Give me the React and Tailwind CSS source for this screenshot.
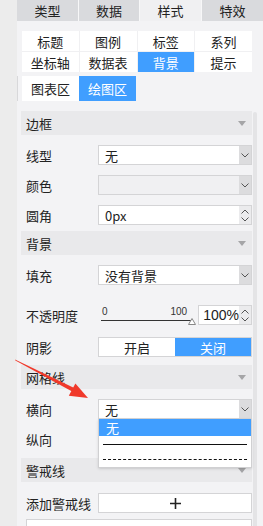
import React from "react";

const BLUE = "bg-[#409eff]";

const Chevron = () => (
  <svg width="8" height="5" viewBox="0 0 8 5" fill="none">
    <path d="M0.5 0.5 L4 4 L7.5 0.5" stroke="#555" strokeWidth="1" />
  </svg>
);

const Spinner = () => (
  <div className="w-[12px] h-full bg-[#ebebed] flex flex-col items-center justify-center gap-[3px]">
    <svg width="8" height="5" viewBox="0 0 8 5" fill="none">
      <path d="M0.5 4.5 L4 1 L7.5 4.5" stroke="#555" strokeWidth="1" />
    </svg>
    <svg width="8" height="5" viewBox="0 0 8 5" fill="none">
      <path d="M0.5 0.5 L4 4 L7.5 0.5" stroke="#555" strokeWidth="1" />
    </svg>
  </div>
);

const SectionHeader = ({ title, className = "" }) => (
  <div className={"h-[24px] bg-[#e9e9eb] flex items-center justify-between pl-[5px] pr-[6px] " + className}>
    <span>{title}</span>
    <svg width="8" height="5" viewBox="0 0 8 5">
      <path d="M0 0 L8 0 L4 5 Z" fill="#a5a5a7" />
    </svg>
  </div>
);

const Row = ({ label, children, className = "" }) => (
  <div className={"flex items-center h-[20px] " + className}>
    <div className="w-[77px] pl-[5px] shrink-0">{label}</div>
    <div className="w-[154px] h-full">{children}</div>
  </div>
);

const Select = ({ value, disabled }) => (
  <div className={"h-full flex border border-[#d4d4d6] " + (disabled ? "bg-[#f0f0f2]" : "bg-white")}>
    <div className="flex-1 pl-[6px] flex items-center">{value}</div>
    <div className="w-[12px] bg-[#dcdcde] flex items-center justify-center">
      <Chevron />
    </div>
  </div>
);

const SubTab = ({ label, active }) => (
  <div className={"h-[20px] flex items-center justify-center " + (active ? BLUE + " text-white" : "bg-white")}>
    {label}
  </div>
);

export default function App() {
  const topTabs = ["类型", "数据", "样式", "特效"];
  const subTabs = ["标题", "图例", "标签", "系列", "坐标轴", "数据表", "背景", "提示"];

  return (
    <div className="relative w-[263px] h-[526px] overflow-hidden flex items-start bg-[#f3f3f5] text-[13px] text-[#222] font-['Noto_Sans_CJK_SC','Microsoft_YaHei',sans-serif] leading-none">
      <div className="w-[17px] h-full shrink-0 bg-[#ececec]" />

      <div className="w-[246px] shrink-0">
        <div className="grid grid-cols-[61px_60px_61px_61px] gap-px h-[21px] bg-[#f7f7f8] pr-px">
          {topTabs.map((t) => (
            <div
              key={t}
              className={"flex items-center justify-center " + (t === "样式" ? "bg-[#f0f0f2]" : "bg-[#d9dadd]")}
            >
              {t}
            </div>
          ))}
        </div>

        <div className="flex items-start">
          <div className="w-[235px] shrink-0">
            <div className="ml-[5px] mt-[10px] w-[230px] grid grid-cols-4 gap-px bg-[#f0f0f2]">
              {subTabs.map((t) => (
                <SubTab key={t} label={t} active={t === "背景"} />
              ))}
            </div>

            <div className="mt-[4px] border-l border-[#d8d8da] pl-[4px] flex h-[25px]">
              <div className="w-[57px] bg-white flex items-center justify-center">图表区</div>
              <div className={"w-[57px] text-white flex items-center justify-center " + BLUE}>绘图区</div>
            </div>

            <div className="ml-[4px] w-[231px] pt-[10px]">
              <SectionHeader title="边框" />
              <Row label="线型" className="mt-[10px]">
                <Select value="无" />
              </Row>
              <Row label="颜色" className="mt-[10px]">
                <Select value="" disabled />
              </Row>
              <Row label="圆角" className="mt-[10px]">
                <div className="h-full flex border border-[#d4d4d6] bg-white">
                  <div className="flex-1 pl-[6px] flex items-center">0px</div>
                  <Spinner />
                </div>
              </Row>

              <SectionHeader title="背景" className="mt-[6px]" />
              <Row label="填充" className="mt-[10px]">
                <Select value="没有背景" />
              </Row>
              <Row label="不透明度" className="mt-[20px]">
                <div className="h-full flex">
                  <div className="w-[101px] h-full relative">
                    <div className="flex justify-between pl-[4px] pr-[11px] pt-[2px] text-[10px] font-['Liberation_Sans',sans-serif] text-[#333]">
                      <span>0</span>
                      <span>100</span>
                    </div>
                    <div className="absolute left-[3px] top-[15px] w-[91px] h-px bg-[#333]" />
                    <svg className="absolute left-[90px] top-[13px]" width="8" height="7" viewBox="0 0 8 7">
                      <path d="M4 0.5 L7.5 6.5 L0.5 6.5 Z" fill="white" stroke="#888" strokeWidth="1" />
                    </svg>
                  </div>
                  <div className="flex-1 flex border border-[#d4d4d6] bg-white">
                    <div className="flex-1 flex items-center pl-[4px] text-[14px] font-['Liberation_Sans',sans-serif]">100%</div>
                    <Spinner />
                  </div>
                </div>
              </Row>
              <Row label="阴影" className="mt-[12px]">
                <div className="h-full flex border border-[#d4d4d6]">
                  <div className="flex-1 bg-white flex items-center justify-center">开启</div>
                  <div className={"flex-1 text-white flex items-center justify-center " + BLUE}>关闭</div>
                </div>
              </Row>

              <SectionHeader title="网格线" className="mt-[8px]" />
              <Row label="横向" className="mt-[10px] relative z-10">
                <div className="h-full relative">
                  <Select value="无" />
                  <div className="absolute left-0 top-[20px] w-[154px] h-[49px] bg-white border border-[#d0d0d2] border-t-0 shadow-sm flex flex-col">
                    <div className={"h-[17px] text-white flex items-center pl-[7px] " + BLUE}>无</div>
                    <div className="h-[16px] flex items-center px-[4px]">
                      <div className="w-full h-px bg-[#111]" />
                    </div>
                    <div className="h-[15px] flex items-center px-[4px]">
                      <div className="w-full border-t border-dashed border-[#111]" />
                    </div>
                  </div>
                </div>
              </Row>
              <Row label="纵向" className="mt-[10px]">
                <Select value="" />
              </Row>

              <SectionHeader title="警戒线" className="mt-[9px]" />
              <Row label="添加警戒线" className="mt-[11px]">
                <div className="h-full bg-white border border-[#d4d4d6] flex items-center justify-center">
                  <svg width="11" height="11" viewBox="0 0 11 11">
                    <path d="M5.5 0 V11 M0 5.5 H11" stroke="#222" strokeWidth="1.6" />
                  </svg>
                </div>
              </Row>
              <div className="mt-[6px] ml-[5px] h-[30px] bg-white border border-[#d4d4d6] flex items-start gap-[14px] pl-[12px] pt-[5px]">
                <span>警戒</span>
                <span className="text-[#f08080]">删除</span>
              </div>
            </div>
          </div>

          <div className="w-[4px] h-[420px] mt-[91px] ml-px shrink-0 rounded-t-[2px] bg-[#e4e4e6]" />
        </div>
      </div>

      <svg className="absolute left-0 top-0 pointer-events-none" width="263" height="526" viewBox="0 0 263 526">
        <polygon points="15,359.6 15.4,360.6 74,392.5 75.8,388.8" fill="#f0392b" />
        <polygon points="88,398 68.8,395.8 75.4,383.4" fill="#f0392b" />
      </svg>
    </div>
  );
}
